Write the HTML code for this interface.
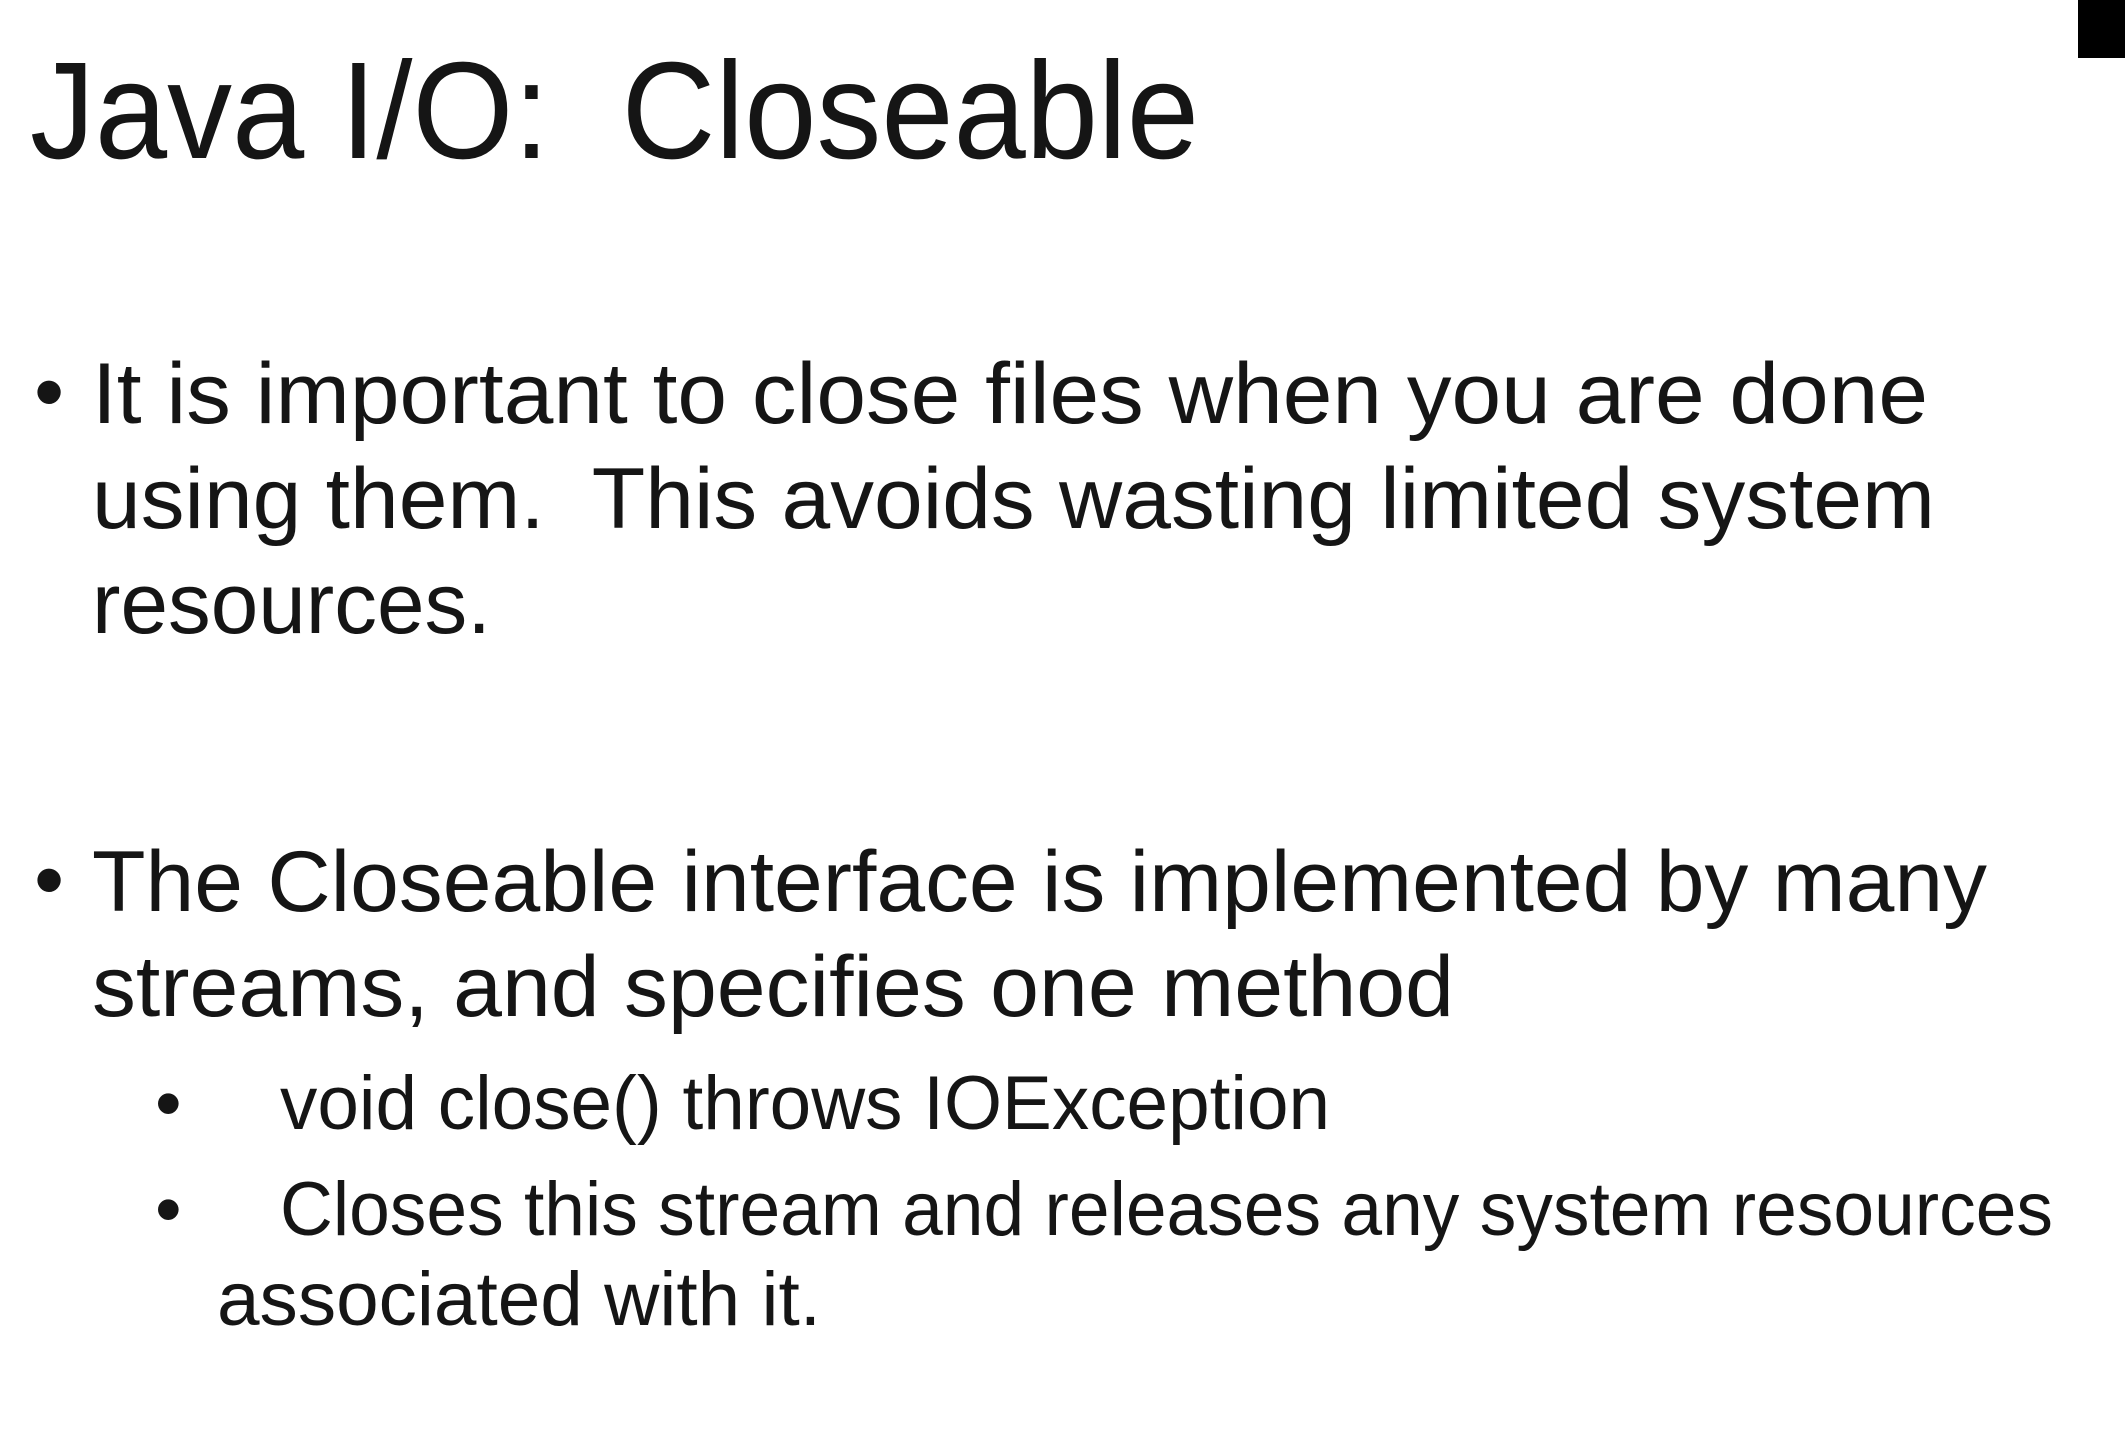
<!DOCTYPE html>
<html><head><meta charset="utf-8"><style>
html,body{margin:0;padding:0;background:#fff;}
svg{display:block;}
text{font-family:"Liberation Sans",sans-serif;fill:#151515;}
</style></head><body>
<svg width="2125" height="1432" viewBox="0 0 2125 1432" xmlns="http://www.w3.org/2000/svg">
<rect x="0" y="0" width="2125" height="1432" fill="#fff"/>
<rect x="2078" y="0" width="47" height="58" fill="#000"/>
<text x="30" y="158" font-size="138" stroke="#fff" stroke-width="3" paint-order="stroke" textLength="1169" lengthAdjust="spacingAndGlyphs">Java I/O:&#160; Closeable</text>
<g font-size="86">
<text x="34" y="421">•</text>
<text x="92" y="423" textLength="1836" lengthAdjust="spacingAndGlyphs">It is important to close files when you are done</text>
<text x="92" y="528" textLength="1843" lengthAdjust="spacingAndGlyphs">using them.&#160; This avoids wasting limited system</text>
<text x="92" y="633" textLength="399" lengthAdjust="spacingAndGlyphs">resources.</text>
<text x="34" y="909">•</text>
<text x="92" y="911" textLength="1895" lengthAdjust="spacingAndGlyphs">The Closeable interface is implemented by many</text>
<text x="92" y="1016" textLength="1362" lengthAdjust="spacingAndGlyphs">streams, and specifies one method</text>
</g>
<g font-size="76">
<text x="155" y="1129">•</text>
<text x="280" y="1129" textLength="1050" lengthAdjust="spacingAndGlyphs">void close() throws IOException</text>
<text x="155" y="1235">•</text>
<text x="280" y="1235" textLength="1773" lengthAdjust="spacingAndGlyphs">Closes this stream and releases any system resources</text>
<text x="217" y="1325" textLength="604" lengthAdjust="spacingAndGlyphs">associated with it.</text>
</g>
</svg>
</body></html>
